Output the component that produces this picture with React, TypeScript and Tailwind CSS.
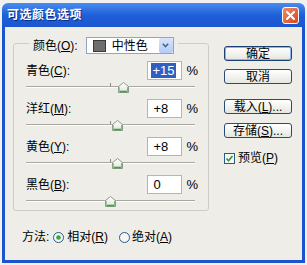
import React from 'react';

// Photoshop "可选颜色选项" dialog, Windows XP look

interface Channel {
  label: string;
  key: string;
  value: string;
  amount: number;
  selected?: boolean;
}

const channels: Channel[] = [
  { label: '青色', key: 'C', value: '+15', amount: 15, selected: true },
  { label: '洋红', key: 'M', value: '+8', amount: 8 },
  { label: '黄色', key: 'Y', value: '+8', amount: 8 },
  { label: '黑色', key: 'B', value: '0', amount: 0 },
];

const TRACK_WIDTH = 169;

const Thumb: React.FC = () => (
  <svg width="11" height="11" viewBox="0 0 11 11">
    <defs>
      <linearGradient id="thumbFill" x1="0" y1="0" x2="0" y2="1">
        <stop offset="0" stopColor="#ffffff" />
        <stop offset="1" stopColor="#e4e4dc" />
      </linearGradient>
    </defs>
    <path d="M5.5 0.5 L10.5 4.5 V10.5 H0.5 V4.5 Z" fill="url(#thumbFill)" stroke="#8c9a8c" strokeWidth="1" />
    <path d="M1.5 9.5 H9.5" stroke="#3da543" strokeWidth="1.6" />
    <path d="M1.3 5 V9" stroke="#7cc77c" strokeWidth="1" />
    <path d="M9.7 5 V9" stroke="#5bb35b" strokeWidth="1" />
  </svg>
);

const Slider: React.FC<{ amount: number }> = ({ amount }) => {
  const left = ((amount + 100) / 200) * TRACK_WIDTH - 5.5;
  return (
    <div className="relative mt-[1px] ml-[12px] h-[12px] w-[169px]">
      <div className="absolute left-0 right-0 top-[5px] h-[2px] border-t border-[#a8a8a0] bg-white" />
      <div className="absolute left-[84px] top-[2px] h-[3px] w-px bg-[#8a8a84]" />
      <div className="absolute top-[1px]" style={{ left: `${left}px` }}>
        <Thumb />
      </div>
    </div>
  );
};

const XpButton: React.FC<{ children: React.ReactNode; primary?: boolean }> = ({ children, primary }) => (
  <div
    className={
      primary
        ? 'flex h-[15px] w-[68px] items-center justify-center rounded-[3px] border border-[#1c3f74] bg-gradient-to-b from-white to-[#e6e6e0] shadow-[inset_0_0_0_1px_#8fb3ec] text-[12px] leading-none text-black'
        : 'flex h-[15px] w-[68px] items-center justify-center rounded-[3px] border border-[#2c4a74] bg-gradient-to-b from-white to-[#e6e6e0] text-[12px] leading-none text-black'
    }
  >
    {children}
  </div>
);

const Radio: React.FC<{ checked?: boolean }> = ({ checked }) => (
  <svg width="11" height="11" viewBox="0 0 11 11">
    <circle cx="5.5" cy="5.5" r="5" fill="#f6f6f2" stroke="#2a5a8a" strokeWidth="1" />
    {checked && <circle cx="5.5" cy="5.5" r="2.3" fill="#3aa640" />}
  </svg>
);

const App: React.FC = () => {
  return (
    <div className="h-[265px] w-[307px] overflow-hidden bg-[#f1f1ef] pl-[2px] pt-[3px] font-['Liberation_Sans','Noto_Sans_CJK_SC',sans-serif] text-[12px] text-black">
      <div className="flex h-[260px] w-[303px] flex-col">
        {/* Title bar */}
        <div className="flex h-[24px] items-center justify-between rounded-t-[6px] bg-gradient-to-b from-[#4a8cf2] via-[#1f5fd8] to-[#1a56cf] pl-[5px] pr-[6px]">
          <span className="text-[12px] font-bold leading-none tracking-[0.5px] text-white [text-shadow:1px_1px_0_#0a2d8a]">
            可选颜色选项
          </span>
          <div className="flex h-[17px] w-[17px] items-center justify-center rounded-[3px] border border-white bg-gradient-to-br from-[#f08a62] to-[#d6451e]">
            <svg width="9" height="9" viewBox="0 0 9 9">
              <path d="M1 1 L8 8 M8 1 L1 8" stroke="white" strokeWidth="2" strokeLinecap="round" />
            </svg>
          </div>
        </div>

        {/* Body */}
        <div className="flex flex-1 flex-col border-x-[3px] border-b-[3px] border-[#1b54cc] bg-[#eeede8] pl-[8px] pt-[16px]">
          <div className="flex items-start">
            {/* Group box */}
            <div className="h-[168px] w-[196px] rounded-[3px] border border-[#cdcdc4]">
              <div className="-mt-[7px] ml-[15px] flex w-fit items-center gap-[8px] bg-[#eeede8] px-[4px]">
                <span className="leading-none">
                  颜色(<u>O</u>):
                </span>
                <div className="flex h-[17px] w-[88px] items-center border border-[#8fa6c2] bg-white pl-[6px]">
                  <div className="h-[12px] w-[13px] border border-[#3a3a3a] bg-[#6e6e6e]" />
                  <span className="ml-[6px] flex-1 leading-none">中性色</span>
                  <div className="flex h-[15px] w-[14px] items-center justify-center rounded-[2px] bg-gradient-to-b from-[#d8e4fb] to-[#b4cbf5]">
                    <svg width="7" height="5" viewBox="0 0 7 5">
                      <path d="M0.8 0.8 L3.5 3.6 L6.2 0.8" fill="none" stroke="#4d6185" strokeWidth="1.5" />
                    </svg>
                  </div>
                </div>
              </div>

              <div className="mt-[7px] flex flex-col gap-[6px]">
                {channels.map((ch) => (
                  <div key={ch.key}>
                    <div className="flex h-[19px] items-center justify-between pl-[12px] pr-[10px]">
                      <span className="leading-none">
                        {ch.label}(<u>{ch.key}</u>):
                      </span>
                      <div className="flex items-center gap-[4px]">
                        <div className="flex h-[19px] w-[35px] items-center border border-[#a9b7c9] bg-white pl-[3px] text-[13px] leading-none">
                          {ch.selected ? (
                            <span className="bg-[#2f5fc0] px-[1px] py-[1px] text-white">{ch.value}</span>
                          ) : (
                            <span className="pl-[2px]">{ch.value}</span>
                          )}
                        </div>
                        <span className="text-[13px] leading-none">%</span>
                      </div>
                    </div>
                    <Slider amount={ch.amount} />
                  </div>
                ))}
              </div>
            </div>

            {/* Buttons */}
            <div className="ml-[15px] mt-[3px] flex flex-col">
              <XpButton primary>确定</XpButton>
              <div className="mt-[8px]">
                <XpButton>取消</XpButton>
              </div>
              <div className="mt-[15px]">
                <XpButton>
                  载入(<u>L</u>)...
                </XpButton>
              </div>
              <div className="mt-[9px]">
                <XpButton>
                  存储(<u>S</u>)...
                </XpButton>
              </div>
              <div className="mt-[14px] flex items-center gap-[3px] pl-[0px]">
                <svg width="11" height="11" viewBox="0 0 11 11">
                  <rect x="0.5" y="0.5" width="10" height="10" fill="#f6f6f2" stroke="#2a5a8a" />
                  <path d="M2.5 5.5 L4.5 7.8 L8.5 3" fill="none" stroke="#2f9a35" strokeWidth="1.6" />
                </svg>
                <span className="leading-none">
                  预览(<u>P</u>)
                </span>
              </div>
            </div>
          </div>

          {/* Method */}
          <div className="ml-[9px] mt-[20px] flex items-center">
            <span className="leading-none">方法:</span>
            <div className="ml-[4px] flex items-center gap-[3px]">
              <Radio checked />
              <span className="leading-none">
                相对(<u>R</u>)
              </span>
            </div>
            <div className="ml-[11px] flex items-center gap-[2px]">
              <Radio />
              <span className="leading-none">
                绝对(<u>A</u>)
              </span>
            </div>
          </div>
        </div>
      </div>
    </div>
  );
};

export default App;
